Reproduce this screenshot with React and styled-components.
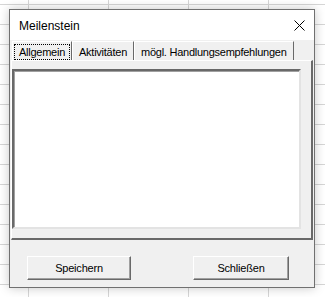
import React from 'react';
import styled, { createGlobalStyle } from 'styled-components';

const GlobalStyle = createGlobalStyle`
  html, body {
    margin: 0;
    height: 100%;
  }
  body {
    background-color: #ffffff;
    background-image:
      linear-gradient(to right, #d6d6d6 1px, transparent 1px),
      linear-gradient(to bottom, #d6d6d6 1px, transparent 1px);
    background-size: 80px 20px;
    background-position: 28px 4px;
    font-family: 'Liberation Sans', Arial, sans-serif;
  }
`;

const Desktop = styled.div`
  padding: 9px;
`;

const Dialog = styled.div`
  width: 304px;
  height: 277px;
  border: 1px solid #707070;
  background: #f0f0f0;
  box-shadow: 0 0 10px rgba(0, 0, 0, 0.22);
  display: flex;
  flex-direction: column;
`;

const TitleBar = styled.div`
  height: 30px;
  background: #ffffff;
  display: flex;
  align-items: center;
  justify-content: space-between;
  padding: 0 9px;
`;

const Title = styled.span`
  font-family: 'Liberation Sans', Arial, sans-serif;
  font-size: 12px;
  color: #000;
  padding-top: 1px;
`;

const CloseIcon = () => (
  <svg width="11" height="11" viewBox="0 0 11 11">
    <path d="M0.5 0.5 L10.5 10.5 M10.5 0.5 L0.5 10.5" stroke="#000" strokeWidth="1" fill="none" />
  </svg>
);

const Body = styled.div`
  flex: 1;
  display: flex;
  flex-direction: column;
  padding: 1px 1px 0 1px;
`;

const TabStrip = styled.div`
  display: flex;
  padding-left: 1px;
  height: 19px;
`;

const Tab = styled.div`
  width: ${(p) => p.w}px;
  box-sizing: border-box;
  border-top: 1px solid #ffffff;
  border-left: 1px solid #ffffff;
  border-right: 1px solid #696969;
  font-size: 11px;
  letter-spacing: -0.25px;
  color: #000;
  display: flex;
  align-items: center;
  padding: 1px 1px 0 1px;
`;

const TabLabel = styled.span`
  flex: 1;
  height: 16px;
  line-height: 15px;
  box-sizing: border-box;
  padding-left: 4px;
  border: 1px dotted ${(p) => (p.active ? '#000' : 'transparent')};
  white-space: nowrap;
  overflow: hidden;
`;

const Page = styled.div`
  height: 180px;
  box-sizing: border-box;
  border-top: 1px solid #ffffff;
  border-left: 1px solid #ffffff;
  border-right: 2px solid #696969;
  border-bottom: 2px solid #696969;
  padding: 8px 12px 0 0;
`;

const TextArea = styled.div`
  width: 289px;
  height: 160px;
  box-sizing: border-box;
  background: #ffffff;
  border-top: 2px solid #696969;
  border-left: 2px solid #696969;
  border-right: 2px solid #e3e3e3;
  border-bottom: 2px solid #e3e3e3;
  box-shadow: inset 1px 1px 0 #a0a0a0;
`;

const ButtonRow = styled.div`
  display: flex;
  justify-content: space-between;
  padding: 16px 24px 0 16px;
`;

const Button = styled.button`
  width: ${(p) => p.w}px;
  height: 24px;
  box-sizing: border-box;
  background: #f0f0f0;
  border-top: 1px solid #ffffff;
  border-left: 1px solid #ffffff;
  border-right: 1px solid #696969;
  border-bottom: 1px solid #696969;
  box-shadow: inset -1px -1px 0 #a0a0a0;
  font-family: 'Liberation Sans', Arial, sans-serif;
  font-size: 11px;
  letter-spacing: -0.2px;
  color: #000;
  padding: 0;
`;

const tabs = [
  { label: 'Allgemein', w: 60, active: true },
  { label: 'Aktivitäten', w: 62 },
  { label: 'mögl. Handlungsempfehlungen', w: 160 },
];

export default function App() {
  return (
    <>
      <GlobalStyle />
      <Desktop>
        <Dialog>
          <TitleBar>
            <Title>Meilenstein</Title>
            <CloseIcon />
          </TitleBar>
          <Body>
            <TabStrip>
              {tabs.map((t) => (
                <Tab key={t.label} w={t.w}>
                  <TabLabel active={t.active}>{t.label}</TabLabel>
                </Tab>
              ))}
            </TabStrip>
            <Page>
              <TextArea />
            </Page>
            <ButtonRow>
              <Button w={104}>Speichern</Button>
              <Button w={96}>Schließen</Button>
            </ButtonRow>
          </Body>
        </Dialog>
      </Desktop>
    </>
  );
}
